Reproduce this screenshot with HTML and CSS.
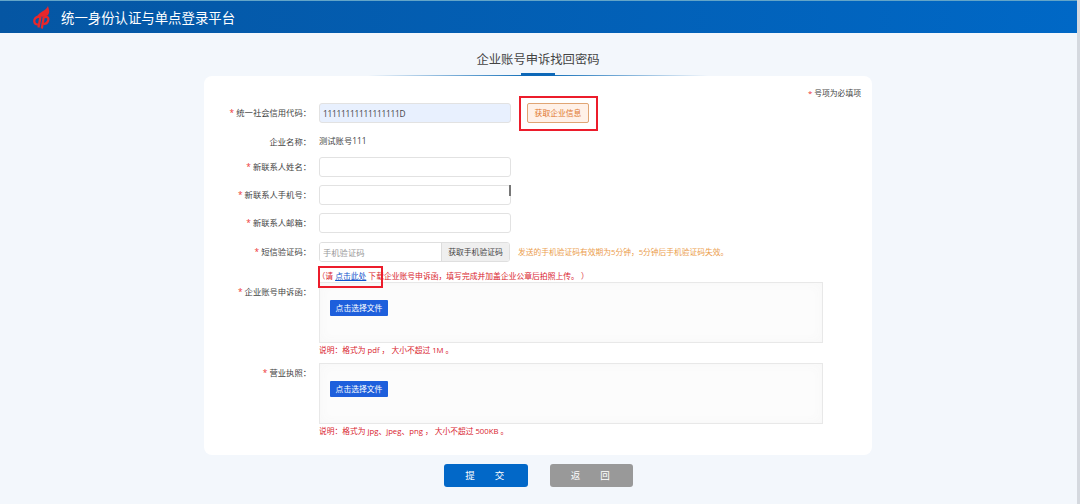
FILE: index.html
```html
<!DOCTYPE html>
<html lang="zh-CN">
<head>
    <meta charset="UTF-8">
    <meta name="viewport" content="width=device-width, initial-scale=1.0">
    <title>企业账号申诉找回密码</title>
    <link rel="stylesheet" href="styles.css">
</head>
<body>

    <header class="header">
        <svg class="logo" viewBox="0 0 17 23" width="17" height="23">
            <path fill="#e8272b" d="M15 0C15.500 3 17.500 5 15 9C13 11 8 10.500 3.500 11.500C5.500 6 13 5 15 0Z"/>
            <path fill="none" stroke="#e8272b" stroke-width="2.300" d="M6.500 10.500C2 11 .9 13.500 1.400 16C1.800 18 3.500 18.500 4.800 18.200M7.500 10.500L5.500 21.500M10.800 10.500L8.800 22.500M10.500 11.500C15 10 16 12 15 15C14 17.500 12.500 18 10.800 17.800"/>
        </svg>
        <span class="site-name">统一身份认证与单点登录平台</span>
    </header>

    <main class="main">
        <h1 class="title">企业账号申诉找回密码</h1>
        <div class="title-line"></div>

        <form class="card">
            <p class="required-tip"><i>*</i> 号项为必填项</p>

            <div class="row">
                <label class="label"><i>*</i> 统一社会信用代码：</label>
                <input class="input filled" type="text" value="11111111111111111D">
                <div class="fetch">
                    <button type="button" class="btn-fetch">获取企业信息</button>
                    <span class="mark mark-fetch"></span>
                </div>
            </div>

            <div class="row row-name">
                <label class="label">企业名称：</label>
                <span class="value">测试账号111</span>
            </div>

            <div class="row row-contact">
                <label class="label"><i>*</i> 新联系人姓名：</label>
                <input class="input" type="text">
            </div>

            <div class="row row-phone">
                <label class="label"><i>*</i> 新联系人手机号：</label>
                <input class="input" type="text">
                <span class="caret"></span>
            </div>

            <div class="row row-mail">
                <label class="label"><i>*</i> 新联系人邮箱：</label>
                <input class="input" type="text">
            </div>

            <div class="row row-sms">
                <label class="label"><i>*</i> 短信验证码：</label>
                <div class="sms">
                    <input class="sms-input" type="text" placeholder="手机验证码">
                    <button type="button" class="sms-btn">获取手机验证码</button>
                </div>
                <span class="sms-tip">发送的手机验证码有效期为5分钟，5分钟后手机验证码失效。</span>
            </div>

            <div class="upload-row">
                <label class="label label-appeal"><i>*</i> 企业账号申诉函：</label>
                <div class="upload">
                    <p class="note">（请 <a href="#">点击此处</a> 下载企业账号申诉函，填写完成并加盖企业公章后拍照上传。 ）<span class="mark mark-link"></span></p>
                    <div class="file-box"><button type="button" class="btn-file">点击选择文件</button></div>
                    <p class="hint">说明：格式为 pdf ， 大小不超过 1M 。</p>
                </div>
            </div>

            <div class="upload-row">
                <label class="label"><i>*</i> 营业执照：</label>
                <div class="upload">
                    <div class="file-box"><button type="button" class="btn-file">点击选择文件</button></div>
                    <p class="hint">说明：格式为 jpg、jpeg、png ， 大小不超过 500KB 。</p>
                </div>
            </div>
        </form>

        <div class="actions">
            <button type="button" class="btn btn-submit"><span>提</span><span>交</span></button>
            <button type="button" class="btn btn-back"><span>返</span><span>回</span></button>
        </div>
    </main>

</body>
</html>
```

FILE: styles.css
```css
* {
    margin: 0;
    padding: 0;
    box-sizing: border-box;
}

body {
    height: 504px;
    overflow: hidden;
    font-family: "Open Sans", "Noto Sans CJK SC", sans-serif;
    font-size: 8.3px;
    color: #444;
    background: #f3f7fc;
    border-right: 3px solid #d5d9df;
}

input,
button {
    font-family: inherit;
    font-size: inherit;
    color: inherit;
}

i {
    font-style: normal;
    color: #e33;
}

/* Cabecera */
.header {
    display: flex;
    align-items: center;
    height: 33px;
    padding-left: 33px;
    background: linear-gradient(90deg, #0556a3, #0068c6);
    border-top: 1px solid #63a5c8;
}

.logo {
    margin-top: 1px;
}

.site-name {
    margin-left: 11px;
    padding-top: 1px;
    font-size: 13.4px;
    line-height: 20px;
    color: #fff;
}

.main {
    width: 668px;
    margin: 0 auto;
    position: relative;
    left: -0.5px;
}

.title {
    height: 40px;
    padding-top: 17px;
    font-size: 12.3px;
    font-weight: 400;
    line-height: 20px;
    text-align: center;
}

.title-line {
    display: flex;
    justify-content: center;
    align-items: flex-end;
    width: 340px;
    height: 3px;
    margin: 0 auto;
    background: linear-gradient(90deg, rgba(27, 116, 187, 0), #1b74bb 45%, #1b74bb 55%, rgba(27, 116, 187, 0)) bottom / 100% 1px no-repeat;
}

.title-line::after {
    content: "";
    width: 34px;
    height: 3px;
    background: #0d68b8;
}

/* Formulario */
.card {
    height: 379px;
    padding-top: 11px;
    background: #fff;
    border-radius: 8px;
}

.required-tip {
    height: 16px;
    padding-right: 11px;
    font-size: 7.8px;
    line-height: 12px;
    text-align: right;
}

.row {
    display: flex;
    height: 20px;
    position: relative;
}

.label {
    width: 107px;
    margin-right: 8px;
    line-height: 19px;
    text-align: right;
    white-space: nowrap;
}

.row-name {
    height: 16px;
    margin: 9px 0;
}

.value {
    line-height: 17px;
}

.row-phone,
.row-mail {
    margin-top: 8px;
}

.row-sms {
    margin-top: 9px;
}

.input {
    width: 192px;
    height: 20px;
    padding: 0 3px;
    border: 1px solid #e2e2e2;
    border-radius: 3px;
    background: #fff;
    letter-spacing: -0.25px;
}

.filled {
    background: #e8f0fe;
}

.fetch {
    position: relative;
    margin-left: 16px;
}

.btn-fetch {
    display: block;
    width: 62px;
    height: 20px;
    padding-bottom: 1px;
    border: 1px solid #e0a574;
    border-radius: 2px;
    background: #fff1e8;
    font-size: 7.8px;
    color: #e0782f;
}

/* Recuadros rojos sobre el contenido */
.mark {
    position: absolute;
    border: 2px solid #ec1c2b;
}

.mark-fetch {
    top: -7px;
    left: -8px;
    width: 79px;
    height: 35px;
}

.mark-link {
    top: 4px;
    left: 0;
    width: 65px;
    height: 22px;
    z-index: 1;
}

.caret {
    position: absolute;
    left: 305px;
    top: 0;
    width: 2px;
    height: 11px;
    background: #777;
}

.sms {
    display: flex;
    width: 191px;
    height: 20px;
    border: 1px solid #dfdfdf;
    border-radius: 3px;
    overflow: hidden;
}

.sms-input {
    width: 121px;
    padding-left: 3px;
    border: 0;
}

.sms-input::placeholder {
    color: #999;
}

.sms-btn {
    flex: 1;
    padding-bottom: 1px;
    border: 0;
    border-left: 1px solid #dcdcdc;
    background: #efefef;
    font-size: 7.8px;
}

.sms-tip {
    margin-left: 8px;
    font-size: 7.75px;
    line-height: 20px;
    color: #eb9d4d;
}

/* Carga de archivos */
.upload-row {
    display: flex;
}

.label-appeal {
    padding-top: 20px;
}

.upload {
    width: 504px;
}

.note {
    position: relative;
    height: 20px;
    padding-top: 8px;
    margin-left: -1.5px;
    font-size: 7.8px;
    line-height: 12px;
    color: #d9232e;
    white-space: nowrap;
}

.note a {
    color: #1155cc;
}

.file-box {
    height: 61px;
    padding: 17px 10px;
    border: 1px solid #e8e8e8;
    background: #fcfcfc;
    box-shadow: inset 0 0 12px #f7f7f7;
}

.btn-file {
    display: block;
    width: 58px;
    height: 16px;
    padding-bottom: 2px;
    border: 0;
    border-radius: 1px;
    background: #1e5fdc;
    font-size: 7.8px;
    color: #fff;
}

.hint {
    height: 20px;
    font-size: 7.75px;
    line-height: 14px;
    color: #d9232e;
    white-space: pre;
}

.actions {
    display: flex;
    justify-content: center;
    gap: 22px;
    margin-top: 9px;
    padding-left: 1px;
}

.btn {
    display: flex;
    justify-content: center;
    align-items: center;
    gap: 20px;
    width: 83.5px;
    height: 23px;
    padding: 0 2px 1px 0;
    border: 0;
    border-radius: 3px;
    font-size: 9.5px;
    color: #fff;
}

.btn-submit {
    background: #0268c8;
}

.btn-back {
    background: #999;
}
```
